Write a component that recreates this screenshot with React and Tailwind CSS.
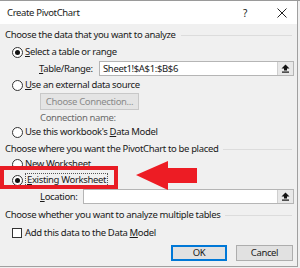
import { useState } from "react";

function Radio({ checked }) {
  return (
    <span className="w-[11px] h-[11px] rounded-full border border-[#333] bg-white flex items-center justify-center shrink-0">
      {checked && <span className="w-[5px] h-[5px] rounded-full bg-[#111]" />}
    </span>
  );
}

function Header({ children }) {
  return (
    <div className="flex items-center h-[14px] pl-[5px] pr-[5px]">
      <span className="whitespace-nowrap">{children}</span>
      <span className="flex-1 h-px bg-[#dcdcdc] ml-[5px]" />
    </div>
  );
}

function RangeButton() {
  return (
    <span className="w-[16px] h-full bg-[#e8e8e8] border-l border-[#cfcfcf] flex items-center justify-center">
      <svg width="9" height="9" viewBox="0 0 9 9">
        <path d="M4.5 0.5 L8.5 4.5 H6 V6.5 H3 V4.5 H0.5 Z" fill="#111" />
        <rect x="1" y="7.5" width="7" height="1.2" fill="#111" />
      </svg>
    </span>
  );
}

export default function App() {
  const [where, setWhere] = useState("existing");

  return (
    <div
      className="relative w-[300px] h-[268px] bg-[#f0f0f0] border-t border-[#9a9a9a] text-[#1a1a1a] text-[9.5px] tracking-[-0.35px] leading-none overflow-hidden"
      style={{ fontFamily: '"Noto Sans", "Liberation Sans", sans-serif' }}
    >
      <div className="w-[298px] h-[266px] border-r border-b border-[#a0a0a0] flex flex-col">
        {/* title bar */}
        <div className="h-[23px] bg-white flex items-center pl-[7px] pr-[10px]">
          <span className="flex-1">Create PivotChart</span>
          <span className="mr-[30px] text-[10px]">?</span>
          <svg width="10" height="10" viewBox="0 0 10 10">
            <path d="M0.5 0.5 L9.5 9.5 M9.5 0.5 L0.5 9.5" stroke="#222" strokeWidth="1" />
          </svg>
        </div>

        <div className="mt-[4px]">
          <Header>Choose the data that you want to analyze</Header>
        </div>

        <div className="flex items-center h-[14px] mt-[3px] pl-[12px] gap-[2px]">
          <Radio checked />
          <span>
            <u>S</u>elect a table or range
          </span>
        </div>

        <div className="flex items-center h-[15px] mt-[2px] pl-[39px]">
          <span className="w-[60px]">
            <u>T</u>able/Range:
          </span>
          <div className="w-[195px] h-[15px] bg-white border border-[#b5b5b5] flex items-center">
            <span className="flex-1 pl-[3px]">Sheet1!$A$1:$B$6</span>
            <RangeButton />
          </div>
        </div>

        <div className="flex items-center h-[14px] mt-[2px] pl-[12px] gap-[2px]">
          <Radio />
          <span>
            <u>U</u>se an external data source
          </span>
        </div>

        <div className="pl-[40px] mt-[1px]">
          <div className="w-[99px] h-[17px] bg-[#e4e4e4] border border-[#c8c8c8] text-[#8a8a8a] flex items-center justify-center">
            Choose Connection...
          </div>
        </div>

        <div className="h-[14px] mt-[1px] pl-[40px] flex items-center text-[#6a6a6a]">
          Connection name:
        </div>

        <div className="flex items-center h-[14px] pl-[12px] gap-[2px]">
          <Radio />
          <span>
            Use this workbook's <u>D</u>ata Model
          </span>
        </div>

        <div className="mt-[3px]">
          <Header>Choose where you want the PivotChart to be placed</Header>
        </div>

        <div
          className="flex items-center h-[14px] mt-[1px] pl-[12px] gap-[2px]"
          onClick={() => setWhere("new")}
        >
          <Radio checked={where === "new"} />
          <span>
            <u>N</u>ew Worksheet
          </span>
        </div>

        <div
          className="flex items-center h-[14px] mt-[2px] pl-[12px] gap-[2px]"
          onClick={() => setWhere("existing")}
        >
          <Radio checked={where === "existing"} />
          <span className="border border-dotted border-[#555] px-[1px] py-[1px]">
            <u>E</u>xisting Worksheet
          </span>
        </div>

        <div className="flex items-center h-[15px] mt-[2px] pl-[40px]">
          <span className="w-[43px]">
            <u>L</u>ocation:
          </span>
          <div className="w-[211px] h-[15px] bg-white border border-[#b5b5b5] flex justify-end">
            <RangeButton />
          </div>
        </div>

        <div className="mt-[4px]">
          <Header>Choose whether you want to analyze multiple tables</Header>
        </div>

        <div className="flex items-center h-[14px] mt-[4px] pl-[12px] gap-[3px]">
          <span className="w-[10px] h-[10px] border border-[#333] bg-white shrink-0" />
          <span>
            Add this data to the Data <u>M</u>odel
          </span>
        </div>

        <div className="flex justify-end gap-[9px] mt-[5px] pr-[4px]">
          <button className="w-[56px] h-[16px] bg-[#e1e1e1] border border-[#0078d7] shadow-[inset_0_0_0_1px_#0078d7] flex items-center justify-center">
            OK
          </button>
          <button className="w-[57px] h-[16px] bg-[#e1e1e1] border border-[#adadad] flex items-center justify-center">
            Cancel
          </button>
        </div>
      </div>

      {/* annotation: red box and arrow */}
      <div className="absolute left-0 top-[165px] w-[118px] h-[23px] border-[4px] border-[#e81c24]" />
      <svg className="absolute left-[135px] top-[159px]" width="64" height="31" viewBox="0 0 64 31">
        <path d="M1 15 L33 1 L33 8 L62 8 L62 23 L33 23 L33 30 Z" fill="#ed1c24" />
      </svg>
    </div>
  );
}
